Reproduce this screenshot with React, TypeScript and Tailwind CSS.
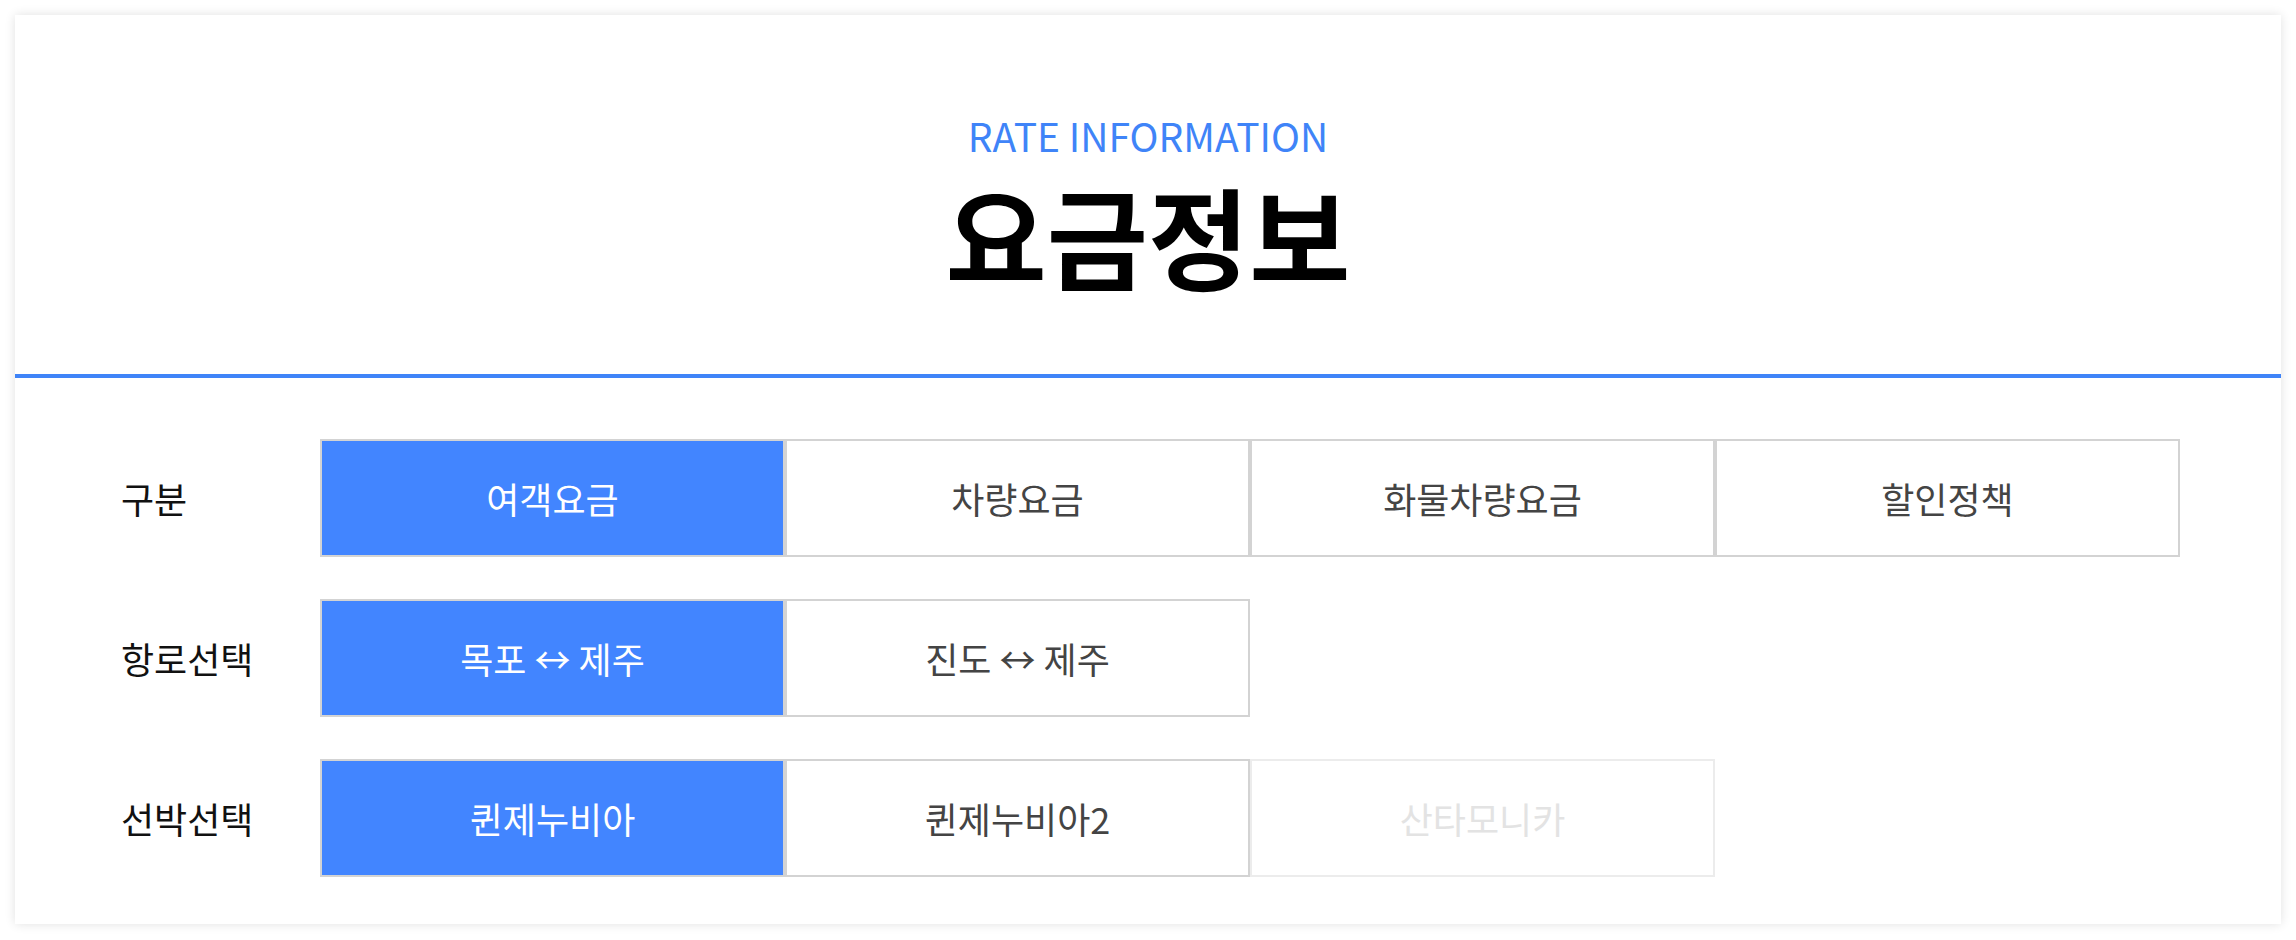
import { useState } from 'react'

const categories = ['여객요금', '차량요금', '화물차량요금', '할인정책']
const routes = ['목포 ↔ 제주', '진도 ↔ 제주']
const ships = [
  { name: '퀸제누비아', disabled: false },
  { name: '퀸제누비아2', disabled: false },
  { name: '산타모니카', disabled: true },
]

interface OptionButtonProps {
  label: string
  active: boolean
  disabled?: boolean
  onClick: () => void
}

function OptionButton({ label, active, disabled, onClick }: OptionButtonProps) {
  let tone = 'border-[#d3d3d3] bg-white text-[#444]'
  if (active) tone = 'border-[#d3d3d3] bg-[#4285ff] text-white'
  if (disabled) tone = 'border-[#ececec] bg-white text-[#e3e3e3]'
  return (
    <button
      type="button"
      disabled={disabled}
      onClick={onClick}
      className={`flex h-[118px] w-[465px] items-center justify-center border-2 text-[36px] leading-none ${tone}`}
    >
      {label}
    </button>
  )
}

function OptionRow({ title, children }: { title: string; children: React.ReactNode }) {
  return (
    <div className="flex items-center">
      <div className="w-[199px] text-[36px] leading-none text-[#111]">{title}</div>
      <div className="flex">{children}</div>
    </div>
  )
}

export default function App() {
  const [category, setCategory] = useState(0)
  const [route, setRoute] = useState(0)
  const [ship, setShip] = useState(0)

  return (
    <div
      className="min-h-[940px] bg-white px-[15px] pt-[15px]"
      style={{ fontFamily: '"Noto Sans CJK KR", "Noto Sans", sans-serif' }}
    >
      <div className="bg-white shadow-[0_0_10px_rgba(0,0,0,0.12)]">
        <div className="flex h-[359px] flex-col items-center pt-[102px]">
          <div className="text-[39px] leading-[36px] text-[#3f84f8]">RATE INFORMATION</div>
          <h1 className="mt-[31px] text-[110px] font-bold leading-[100px] text-black">요금정보</h1>
        </div>
        <div className="h-[4px] bg-[#3f84f8]" />
        <div className="flex flex-col gap-[42px] pb-[47px] pl-[106px] pt-[61px]">
          <OptionRow title="구분">
            {categories.map((item, index) => (
              <OptionButton key={item} label={item} active={category === index} onClick={() => setCategory(index)} />
            ))}
          </OptionRow>
          <OptionRow title="항로선택">
            {routes.map((item, index) => (
              <OptionButton key={item} label={item} active={route === index} onClick={() => setRoute(index)} />
            ))}
          </OptionRow>
          <OptionRow title="선박선택">
            {ships.map((item, index) => (
              <OptionButton
                key={item.name}
                label={item.name}
                active={ship === index}
                disabled={item.disabled}
                onClick={() => setShip(index)}
              />
            ))}
          </OptionRow>
        </div>
      </div>
    </div>
  )
}
